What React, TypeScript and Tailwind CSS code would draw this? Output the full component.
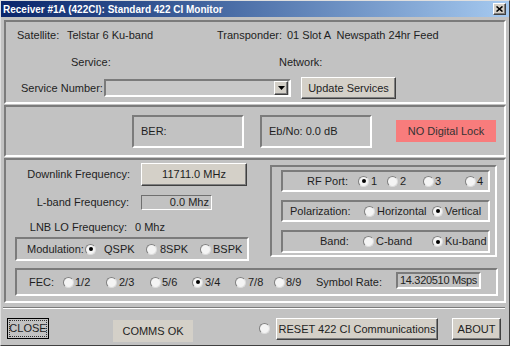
import React from 'react';

const sunk = 'border-2 border-t-[#7b7b7b] border-l-[#7b7b7b] border-b-white border-r-white';
const raised =
  'bg-[#d4d0c8] border border-t-white border-l-white border-b-[#404040] border-r-[#404040] shadow-[inset_-1px_-1px_0_#808080]';

const Radio = ({ checked = false }: { checked?: boolean }) => (
  <span className="inline-flex w-[11px] h-[11px] shrink-0 items-center justify-center rounded-full bg-[#f4f4f4] border border-t-[#808080] border-l-[#808080] border-b-[#dcdcdc] border-r-[#dcdcdc]">
    {checked && <span className="w-[4px] h-[4px] rounded-full bg-black" />}
  </span>
);

const Opt = ({ label, checked, w, gap }: { label: string; checked?: boolean; w?: string; gap: string }) => (
  <span className={`flex items-center ${w ?? ''}`}>
    <Radio checked={checked} />
    <span className={gap}>{label}</span>
  </span>
);

const App = () => {
  return (
    <div className="w-[510px] h-[346px] overflow-hidden bg-[#c2c2c2] border border-t-[#dfdfdf] border-l-[#dfdfdf] border-b-[#404040] border-r-[#404040] flex flex-col font-['Liberation_Sans',Arial,sans-serif] text-[11px] leading-[13px] text-[#1e1e1e]">
      {/* title bar */}
      <div className="h-[16px] flex items-center bg-gradient-to-r from-[#0a246a] to-[#a6caf0]">
        <span className="pl-[2px] text-[10px] font-bold text-white">Receiver #1A (422CI): Standard 422 CI Monitor</span>
        <span className={`ml-auto mr-[3px] w-[13px] h-[12px] flex items-center justify-center ${raised}`}>
          <svg width="7" height="6" viewBox="0 0 7 6">
            <path d="M0.5 0.5 L6.5 5.5 M6.5 0.5 L0.5 5.5" stroke="#000" strokeWidth="1.6" />
          </svg>
        </span>
      </div>

      {/* satellite / service */}
      <div className={`mt-[3px] ml-[3px] w-[502px] h-[84px] ${sunk} flex flex-col pl-[11px] pt-[7px]`}>
        <div className="flex items-center h-[13px] whitespace-pre">
          <span className="w-[50px]">Satellite:</span>
          <span className="w-[150px]">Telstar 6 Ku-band</span>
          <span className="w-[70px]">Transponder:</span>
          <span>01 Slot A  Newspath 24hr Feed</span>
        </div>
        <div className="flex items-center h-[13px] mt-[14px]">
          <span className="ml-[54px] w-[208px]">Service:</span>
          <span>Network:</span>
        </div>
        <div className="flex items-center h-[22px] mt-[8px]">
          <span className="ml-[4px] w-[83px]">Service Number:</span>
          <div className={`w-[187px] h-[18px] ${sunk} bg-[#c8c8c8] flex items-center justify-end pr-[1px]`}>
            <span className={`w-[14px] h-[14px] flex items-center justify-center ${raised}`}>
              <svg width="7" height="4" viewBox="0 0 7 4">
                <path d="M0 0 H7 L3.5 4 Z" fill="#000" />
              </svg>
            </span>
          </div>
          <button className={`ml-[10px] w-[95px] h-[22px] ${raised} flex items-center justify-center`}>Update Services</button>
        </div>
      </div>

      {/* signal */}
      <div className={`mt-[1px] ml-[3px] w-[502px] h-[52px] ${sunk} flex items-center pl-[126px]`}>
        <div className={`w-[112px] h-[33px] ${sunk} flex items-center pl-[7px]`}>BER:</div>
        <div className={`ml-[16px] w-[112px] h-[33px] ${sunk} flex items-center pl-[7px]`}>Eb/No: 0.0 dB</div>
        <div className="ml-[24px] w-[100px] h-[22px] bg-[#f87c7c] flex items-center justify-center text-[#333]">NO Digital Lock</div>
      </div>

      {/* tuning */}
      <div className={`mt-[1px] ml-[3px] w-[502px] h-[145px] ${sunk} flex flex-col pl-[9px] pt-[3px]`}>
        <div className="flex items-start">
          <div className="w-[234px] flex flex-col">
            <div className="flex items-center h-[23px]">
              <span className="w-[115px] text-right">Downlink Frequency:</span>
              <span className={`ml-[11px] w-[106px] h-[23px] ${raised} flex items-center justify-center`}>11711.0 MHz</span>
            </div>
            <div className="flex items-center h-[15px] mt-[9px]">
              <span className="w-[114px] text-right">L-band Frequency:</span>
              <span className="ml-[12px] w-[71px] h-[15px] border border-t-[#6f6f6f] border-l-[#6f6f6f] border-b-white border-r-white flex items-center justify-end pr-[2px]">0.0 Mhz</span>
            </div>
            <div className="flex items-center h-[14px] mt-[10px]">
              <span className="w-[112px] text-right">LNB LO Frequency:</span>
              <span className="ml-[8px]">0 Mhz</span>
            </div>
            <div className={`mt-[3px] w-[234px] h-[24px] ${sunk} flex items-center pl-[10px]`}>
              <span className="w-[58px]">Modulation:</span>
              <Opt label="QSPK" checked w="w-[61px]" gap="ml-[8px]" />
              <Opt label="8SPK" w="w-[54px]" gap="ml-[3px]" />
              <Opt label="BSPK" gap="ml-[2px]" />
            </div>
          </div>

          <div className={`ml-[21px] mt-[2px] w-[227px] h-[92px] ${sunk} flex flex-col pl-[9px] pt-[3px]`}>
            <div className={`w-[209px] h-[22px] ${sunk} flex items-center pl-[24px]`}>
              <span className="w-[51px]">RF Port:</span>
              <Opt label="1" checked w="w-[29px]" gap="ml-[2px]" />
              <Opt label="2" w="w-[36px]" gap="ml-[2px]" />
              <Opt label="3" w="w-[42px]" gap="ml-[1px]" />
              <Opt label="4" gap="ml-[1px]" />
            </div>
            <div className={`mt-[8px] w-[209px] h-[22px] ${sunk} flex items-center pl-[7px]`}>
              <span className="w-[74px]">Polarization:</span>
              <Opt label="Horizontal" w="w-[68px]" gap="ml-[2px]" />
              <Opt label="Vertical" checked gap="ml-[2px]" />
            </div>
            <div className={`mt-[8px] w-[209px] h-[23px] ${sunk} flex items-center pl-[37px]`}>
              <span className="w-[43px]">Band:</span>
              <Opt label="C-band" w="w-[69px]" gap="ml-[2px]" />
              <Opt label="Ku-band" checked gap="ml-[2px]" />
            </div>
          </div>
        </div>

        <div className={`mt-[7px] w-[483px] h-[28px] ${sunk} flex items-center pl-[12px]`}>
          <span className="w-[34px]">FEC:</span>
          <Opt label="1/2" w="w-[43px]" gap="ml-[1px]" />
          <Opt label="2/3" w="w-[44px]" gap="ml-[2px]" />
          <Opt label="5/6" w="w-[42px]" gap="ml-[1px]" />
          <Opt label="3/4" checked w="w-[43px]" gap="ml-[2px]" />
          <Opt label="7/8" w="w-[39px]" gap="ml-[2px]" />
          <Opt label="8/9" w="w-[42px]" gap="ml-[1px]" />
          <span className="w-[80px]">Symbol Rate:</span>
          <span className={`w-[85px] h-[17px] -mt-[4px] ${sunk} flex items-center justify-center whitespace-nowrap tracking-[-0.3px]`}>14.320510 Msps</span>
        </div>
      </div>

      {/* separator */}
      <div className="mt-[4px] ml-[2px] w-[502px] h-[2px] border-t border-t-[#7b7b7b] border-b border-b-white" />

      {/* buttons */}
      <div className="mt-[9px] flex items-start">
        <button className="ml-[6px] w-[42px] h-[21px] border border-black bg-[#c2c2c2] p-[1px]">
          <span className="flex w-full h-full items-center justify-center border border-dotted border-[#333]">CLOSE</span>
        </button>
        <div className="ml-[64px] mt-[2px] w-[80px] h-[22px] bg-[#d4d0c8] flex items-center justify-center">COMMS OK</div>
        <span className="ml-[66px] mt-[5px]">
          <Radio />
        </span>
        <button className={`ml-[6px] w-[162px] h-[22px] ${raised} flex items-center justify-center`}>RESET 422 CI Communications</button>
        <button className={`ml-[14px] w-[49px] h-[22px] ${raised} flex items-center justify-center`}>ABOUT</button>
      </div>
    </div>
  );
};

export default App;
